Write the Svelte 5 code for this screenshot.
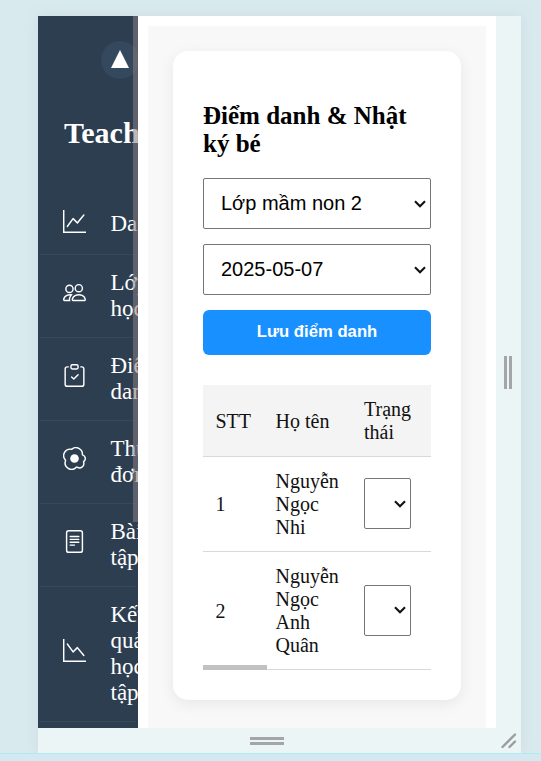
<script>
  const graphAxes = 'M0 0h1v15h15v1H0z';
  const menu = [
    { lines: ['Dashboard'], paths: [graphAxes, 'M14.817 3.113a.5.5 0 0 1 .07.704l-4.5 5.5a.5.5 0 0 1-.74.037L7.06 6.767l-3.656 5.027a.5.5 0 0 1-.808-.588l4-5.5a.5.5 0 0 1 .758-.06l2.609 2.61 4.15-5.073a.5.5 0 0 1 .704-.07'] },
    { lines: ['Lớp', 'học'], paths: ['M15 14s1 0 1-1-1-4-5-4-5 3-5 4 1 1 1 1zm-7.978-1L7 12.996c.001-.264.167-1.03.76-1.72C8.312 10.629 9.282 10 11 10c1.717 0 2.687.63 3.24 1.276.593.69.758 1.457.76 1.72l-.008.002-.014.002zM11 7a2 2 0 1 0 0-4 2 2 0 0 0 0 4m3-2a3 3 0 1 1-6 0 3 3 0 0 1 6 0M6.936 9.28a6 6 0 0 0-1.23-.247A7 7 0 0 0 5 9c-4 0-5 3-5 4q0 1 1 1h4.216A2.24 2.24 0 0 1 5 13c0-1.01.377-2.042 1.09-2.904.243-.294.526-.569.846-.816M4.92 10A5.5 5.5 0 0 0 4 13H1c0-.26.164-1.03.76-1.724.545-.636 1.492-1.256 3.16-1.275ZM1.5 5.5a3 3 0 1 1 6 0 3 3 0 0 1-6 0m3-2a2 2 0 1 0 0 4 2 2 0 0 0 0-4'] },
    { lines: ['Điểm', 'danh'], paths: ['M10.854 7.146a.5.5 0 0 1 0 .708l-3 3a.5.5 0 0 1-.708 0l-1.5-1.5a.5.5 0 1 1 .708-.708L7.5 9.793l2.646-2.647a.5.5 0 0 1 .708 0', 'M4 1.5H3a2 2 0 0 0-2 2V14a2 2 0 0 0 2 2h10a2 2 0 0 0 2-2V3.5a2 2 0 0 0-2-2h-1v1h1a1 1 0 0 1 1 1V14a1 1 0 0 1-1 1H3a1 1 0 0 1-1-1V3.5a1 1 0 0 1 1-1h1z', 'M9.5 1a.5.5 0 0 1 .5.5v1a.5.5 0 0 1-.5.5h-3a.5.5 0 0 1-.5-.5v-1a.5.5 0 0 1 .5-.5zm-3-1A1.5 1.5 0 0 0 5 1.5v1A1.5 1.5 0 0 0 6.5 4h3A1.5 1.5 0 0 0 11 2.5v-1A1.5 1.5 0 0 0 9.5 0z'] },
    { lines: ['Thực', 'đơn'], paths: ['M8 11a3 3 0 1 0 0-6 3 3 0 0 0 0 6', 'M13.997 5.17a5 5 0 0 0-8.101-4.09A5 5 0 0 0 1.28 9.342a5 5 0 0 0 8.336 5.109 3.5 3.5 0 0 0 5.201-4.065 3.001 3.001 0 0 0-.822-5.216zm-1-.034a1 1 0 0 0 .668.977 2.001 2.001 0 0 1 .547 3.478 1 1 0 0 0-.341 1.113 2.5 2.5 0 0 1-3.715 2.905 1 1 0 0 0-1.262.152 4 4 0 0 1-6.67-4.087 1 1 0 0 0-.2-1 4 4 0 0 1 3.693-6.61 1 1 0 0 0 .8-.2 4 4 0 0 1 6.48 3.273z'] },
    { lines: ['Bài', 'tập'], paths: ['M5 4a.5.5 0 0 0 0 1h6a.5.5 0 0 0 0-1zm-.5 2.5A.5.5 0 0 1 5 6h6a.5.5 0 0 1 0 1H5a.5.5 0 0 1-.5-.5M5 8a.5.5 0 0 0 0 1h6a.5.5 0 0 0 0-1zm0 2a.5.5 0 0 0 0 1h3a.5.5 0 0 0 0-1z', 'M2 2a2 2 0 0 1 2-2h8a2 2 0 0 1 2 2v12a2 2 0 0 1-2 2H4a2 2 0 0 1-2-2zm10-1H4a1 1 0 0 0-1 1v12a1 1 0 0 0 1 1h8a1 1 0 0 0 1-1V2a1 1 0 0 0-1-1'] },
    { lines: ['Kết', 'quả', 'học', 'tập'], paths: [graphAxes, 'M14.817 11.887a.5.5 0 0 0 .07-.704l-4.5-5.5a.5.5 0 0 0-.74-.037L7.06 8.233 3.404 3.206a.5.5 0 0 0-.808.588l4 5.5a.5.5 0 0 0 .758.06l2.609-2.61 4.15 5.073a.5.5 0 0 0 .704.07'] }
  ];
  const filters = ['Lớp mầm non 2', '2025-05-07'];
  const pupils = [
    { id: 1, name: ['Nguyễn', 'Ngọc', 'Nhi'] },
    { id: 2, name: ['Nguyễn', 'Ngọc', 'Anh', 'Quân'] }
  ];
</script>

{#snippet chevron()}
  <svg class="chevron" width="12" height="8" viewBox="0 0 12 8"><path d="M1 1.3 6 6.2 11 1.3" fill="none" stroke="#111" stroke-width="2.1" /></svg>
{/snippet}

<div class="stage">
  <div class="device">
    <div class="viewport">
      <aside>
        <div class="toggle"><svg width="18" height="18" viewBox="0 0 18 18"><path d="M9 0 18 18H0z" fill="#fff" /></svg></div>
        <h1>Teacher</h1>
        <nav>
          {#each menu as item}
            <a href="#menu">
              <svg class="icon" viewBox="0 0 16 16" fill="currentColor">
                {#each item.paths as d}<path {d} />{/each}
              </svg>
              <span class="label">{#each item.lines as line}<span>{line}</span>{/each}</span>
            </a>
          {/each}
        </nav>
        <div class="side-thumb"></div>
      </aside>
      <main>
        <section class="card">
          <h2>Điểm danh &amp; Nhật<br />ký bé</h2>
          <div class="filters">
            {#each filters as text}
              <div class="select"><span>{text}</span>{@render chevron()}</div>
            {/each}
            <button>Lưu điểm danh</button>
          </div>
          <div class="table-wrap">
            <table>
              <colgroup><col class="c1" /><col class="c2" /><col class="c3" /></colgroup>
              <thead><tr><th>STT</th><th>Họ tên</th><th>Trạng<br />thái</th></tr></thead>
              <tbody>
                {#each pupils as p}
                  <tr>
                    <td>{p.id}</td>
                    <td>{#each p.name as part}<div>{part}</div>{/each}</td>
                    <td><div class="select small">{@render chevron()}</div></td>
                  </tr>
                {/each}
              </tbody>
            </table>
            <div class="x-thumb"></div>
          </div>
        </section>
      </main>
    </div>
    <div class="handle right"><i></i><i></i></div>
    <div class="handle bottom"><i></i><i></i></div>
    <div class="handle corner">
      <svg width="16" height="16" viewBox="0 0 16 16" stroke="#9a9d9e" stroke-width="2.4" stroke-linecap="round"><path d="M1.5 14 14 1.5M8.5 14 14 8.5" /></svg>
    </div>
  </div>
  <footer></footer>
</div>

<style>
  :global(body) { margin: 0; overflow: hidden; }
  .stage {
    box-sizing: border-box; width: 541px; height: 761px; padding: 16px 20px 0 38px;
    display: flex; flex-direction: column; overflow: hidden;
    background: #d9eaee; font-family: 'Liberation Serif', serif;
  }
  .device {
    display: grid; grid-template-columns: 458px 25px; grid-template-rows: 712px 25px;
    width: 483px; box-shadow: 0 0 12px rgba(190, 205, 215, 0.45);
  }
  .viewport { display: flex; background: #fff; overflow: hidden; }
  aside {
    position: relative; box-sizing: border-box; width: 100px; height: 712px; flex: none;
    overflow: hidden; background: #2c3e50; color: #fff; padding-top: 25px;
  }
  .toggle {
    width: 38px; height: 38px; margin-left: 63px; border-radius: 50%; background: #34495e;
    display: flex; align-items: center; justify-content: center;
  }
  .toggle svg { margin-bottom: 3px; }
  h1 { margin: 36px 0 0 26px; font-size: 30px; line-height: 35px; font-weight: bold; }
  nav { margin: 45px 2px 0; }
  nav a {
    display: flex; align-items: center; padding: 15px 0 15px 23px; color: #fff;
    text-decoration: none; border-bottom: 1px solid #34495e; white-space: nowrap;
  }
  nav a:first-child { padding-top: 14px; }
  .icon { width: 23px; height: 23px; flex: none; margin: 0 24.5px 7px 0; }
  nav a:first-child .icon { margin-top: 1px; margin-bottom: 6px; }
  .label { display: flex; flex-direction: column; font-size: 23px; line-height: 26px; }
  .side-thumb { position: absolute; top: 0; right: 0; width: 5px; height: 506px; background: rgba(136, 126, 130, 0.55); }
  main {
    box-sizing: border-box; width: 338px; height: 702px; margin: 10px 10px 0;
    padding: 25px 25px 28px; background: #f8f8f8;
  }
  .card {
    box-sizing: border-box; width: 288px; height: 649px; padding: 51px 30px 0;
    border-radius: 15px; background: #fff; box-shadow: 0 4px 15px rgba(0, 0, 0, 0.07);
  }
  h2 { margin: 0 0 20px; font-size: 25px; line-height: 28px; font-weight: bold; color: #000; white-space: nowrap; }
  .filters { display: flex; flex-direction: column; gap: 15px; }
  .select {
    box-sizing: border-box; height: 51px; padding: 0 4px 0 17px; border: 1px solid #767676;
    border-radius: 2px; background: #fff; display: flex; align-items: center; justify-content: space-between;
    font: 20px 'Liberation Sans', sans-serif; color: #000;
  }
  .select.small { width: 47px; margin: -1px 0 1px; padding: 0 4px 0 0; justify-content: flex-end; }
  .chevron { flex: none; }
  button {
    height: 45px; padding: 0 0 2px; border: 0; border-radius: 6px; background: #1890ff; color: #fff;
    font: bold 16.7px 'Liberation Sans', sans-serif;
  }
  .table-wrap { position: relative; width: 228px; margin-top: 30px; }
  table { width: 228px; table-layout: fixed; border-collapse: separate; border-spacing: 0; }
  .c1 { width: 60px; }
  .c2 { width: 89px; }
  .c3 { width: 79px; }
  th, td {
    padding: 13px 0 12px 12.5px; border-bottom: 1px solid #d9d9d9; text-align: left;
    vertical-align: middle; font-size: 20px; line-height: 23px; font-weight: normal; color: #111;
  }
  th { background: #f4f4f4; }
  th:last-child, td:last-child { padding-left: 12px; }
  .x-thumb { position: absolute; left: 0; bottom: 0; width: 64px; height: 5px; background: #c1c1c1; }
  .handle { display: flex; align-items: center; justify-content: center; background: #ebf5f5; }
  .handle i { background: #a3a5a6; }
  .right { grid-column: 2; grid-row: 1; gap: 2px; padding-right: 1px; box-sizing: border-box; }
  .right i { width: 3px; height: 33px; }
  .bottom { grid-column: 1; grid-row: 2; flex-direction: column; gap: 2px; }
  .bottom i { width: 34px; height: 3px; }
  .corner { grid-column: 2; grid-row: 2; }
  .corner svg { fill: none; }
  footer { flex: none; height: 8px; margin: 0 -20px 0 -38px; box-sizing: border-box; border-top: 1px solid #b2e8ef; background: #d3e9f2; }
</style>
